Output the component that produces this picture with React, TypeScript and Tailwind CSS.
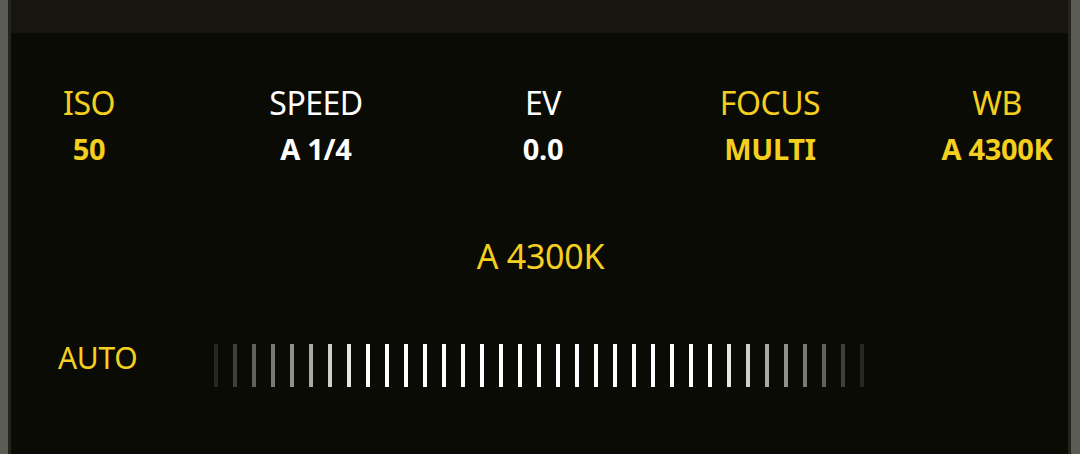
const stats = [
  { label: "ISO", value: "50", active: true },
  { label: "SPEED", value: "A 1/4", active: false },
  { label: "EV", value: "0.0", active: false },
  { label: "FOCUS", value: "MULTI", active: true },
  { label: "WB", value: "A 4300K", active: true },
];

// brightness of each tick on the white-balance dial, faded at both ends
const ticks = [
  0.12, 0.22, 0.35, 0.45, 0.55, 0.65, 0.8, 0.9,
  1, 1, 1, 1, 1, 1, 1, 1, 1, 1, 1, 1, 1, 1, 1, 1, 1, 1, 1,
  0.9, 0.8, 0.65, 0.55, 0.45, 0.35, 0.22, 0.12,
];

function Stat({ label, value, active }: { label: string; value: string; active: boolean }) {
  const color = active ? "text-[#f5cf1f]" : "text-white";
  return (
    <div className={`flex flex-col items-center ${color}`}>
      <div className="text-[32px] leading-none tracking-[-0.5px]">{label}</div>
      <div className="mt-[15px] text-[29px] font-bold leading-none tracking-[-0.3px]">{value}</div>
    </div>
  );
}

export default function App() {
  return (
    <div className="flex w-[1080px] h-[454px] overflow-hidden bg-[#0b0b05] font-['Noto_Sans',sans-serif]">
      <div className="w-[8px] bg-[#5b5d55]" />
      <div className="w-[3px] bg-[#24241d]" />

      <div className="flex-1 flex flex-col">
        {/* dim strip along the top edge */}
        <div className="h-[33px] bg-[#16160f]" />

        {/* exposure settings */}
        <div className="mt-[54px] pl-[8px] grid grid-cols-[repeat(5,140px)] gap-x-[87px]">
          {stats.map((s) => (
            <Stat key={s.label} {...s} />
          ))}
        </div>

        {/* current white balance */}
        <div className="mt-[76px] text-center text-[34px] leading-none text-[#f5cf1f] tracking-[-0.3px] pl-[2px]">
          A 4300K
        </div>

        {/* dial */}
        <div className="mt-[70px] flex items-start pl-[47px]">
          <div className="w-[156px] text-[30px] leading-none text-[#f5cf1f] tracking-[-0.3px]">AUTO</div>
          <div className="mt-[1px] flex gap-[15px]">
            {ticks.map((o, i) => (
              <div key={i} className="w-[4px] h-[43px] bg-white" style={{ opacity: o }} />
            ))}
          </div>
        </div>
      </div>

      <div className="w-[3px] bg-[#24241d]" />
      <div className="w-[9px] bg-[#5b5d55]" />
    </div>
  );
}
